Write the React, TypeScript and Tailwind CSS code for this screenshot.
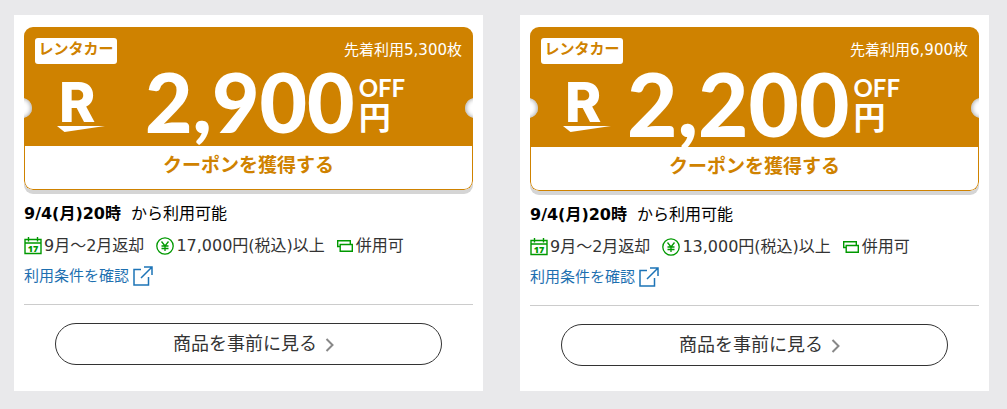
type Coupon = {
  amount: string;
  limit: string;
  minPrice: string;
  headerClass: string;
  priceClass: string;
  amountClass: string;
};

const coupons: Coupon[] = [
  {
    amount: "2,900",
    limit: "5,300",
    minPrice: "17,000",
    headerClass: "h-[119px]",
    priceClass: "ml-10",
    amountClass: "text-[82px] leading-[76px]",
  },
  {
    amount: "2,200",
    limit: "6,900",
    minPrice: "13,000",
    headerClass: "h-[120px]",
    priceClass: "ml-4",
    amountClass: "text-[87px] leading-[82px]",
  },
];

function Logo() {
  return (
    <svg className="h-[72px] w-12 shrink-0" viewBox="0 0 48 72" fill="#fff" aria-label="R">
      <text x="2" y="59" fontSize="55" fontWeight="800" fontFamily="Inter, sans-serif">
        R
      </text>
      <path d="M0 63H48L7.500 69Z" />
    </svg>
  );
}

function CalendarIcon() {
  return (
    <svg className="h-[18px] w-[18px]" viewBox="0 0 18 18" fill="none" stroke="#090" strokeWidth="1.400">
      <path d="M1 2.500H17V16.500H1ZM1 6H17M4.500 0V4.500M13.500 0V4.500" />
      <text
        x="9"
        y="14.500"
        fontSize="9"
        fontWeight="800"
        textAnchor="middle"
        fill="#090"
        stroke="none"
        fontFamily="Open Sans, sans-serif"
      >
        17
      </text>
    </svg>
  );
}

function YenIcon() {
  return (
    <svg className="h-[18px] w-[18px]" viewBox="0 0 18 18" fill="none" stroke="#090" strokeWidth="1.300">
      <circle cx="9" cy="9" r="8.200" />
      <path d="M5.500 4.500L9 9L12.500 4.500M9 9V14M5.500 9H12.500M5.500 11.500H12.500" />
    </svg>
  );
}

function TicketsIcon() {
  return (
    <svg className="h-3 w-4" viewBox="0 0 16 12" fill="none" stroke="#090" strokeWidth="1.400">
      <path d="M3 6.500H0.700V0.700H13.300V4" />
      <path d="M3.200 4.500H15.300V11.300H3.200Z" />
    </svg>
  );
}

function ExternalIcon() {
  return (
    <svg className="h-5 w-5" viewBox="0 0 20 20" fill="none" stroke="#1d74b7" strokeWidth="1.500">
      <path d="M8 3.500H1V19H15.500V11" />
      <path d="M8 12L18.500 1.500M11 1H19V9" />
    </svg>
  );
}

function CouponCard({ coupon }: { coupon: Coupon }) {
  return (
    <section className="bg-white px-[10px] pt-3 pb-[25px]">
      <div className="overflow-hidden rounded-[9px] bg-white shadow-[0_4px_0_#d5d5d5]">
        <div className={`relative bg-[#cf8200] px-[11px] pt-[11px] text-white ${coupon.headerClass}`}>
          <div className="flex justify-between">
            <span className="h-[26px] w-[82px] rounded-[3px] bg-white text-center text-[15px] leading-[22px] font-bold text-[#cf8200]">
              レンタカー
            </span>
            <span className="text-[15px] leading-6">先着利用{coupon.limit}枚</span>
          </div>
          <div className="-mt-px flex h-[80px] items-start pl-[22px]">
            <Logo />
            <div className={`flex ${coupon.priceClass}`}>
              <span className={`font-['Lato',sans-serif] font-black ${coupon.amountClass}`}>
                {coupon.amount}
              </span>
              <span className="ml-1 flex flex-col pt-3 font-bold">
                <span className="font-['Lato',sans-serif] text-[24px] leading-[26px]">OFF</span>
                <span className="text-[32px] leading-[34px]">円</span>
              </span>
            </div>
          </div>
          <span className="absolute top-[71px] -left-3 h-5 w-5 rounded-full bg-white shadow-[inset_-1px_0_4px_#aaa]" />
          <span className="absolute top-[71px] -right-3 h-5 w-5 rounded-full bg-white shadow-[inset_1px_0_4px_#aaa]" />
        </div>
        <button className="block h-11 w-full rounded-b-[9px] border border-t-0 border-[#cf8200] pb-1 text-[19px] font-bold text-[#cf8200]">
          クーポンを獲得する
        </button>
      </div>

      <p className="mt-3 flex gap-[10px] text-[16px] leading-6 text-black">
        <b>9/4(月)20時</b>
        <span>から利用可能</span>
      </p>
      <ul className="mt-2 flex gap-3 text-[16px] leading-6 whitespace-nowrap">
        <li className="flex items-center gap-[2px]">
          <CalendarIcon />
          9月～2月返却
        </li>
        <li className="flex items-center gap-[2px]">
          <YenIcon />
          {coupon.minPrice}円(税込)以上
        </li>
        <li className="flex items-center gap-[3px]">
          <TicketsIcon />
          併用可
        </li>
      </ul>
      <a href="#" className="mt-[6px] flex items-center gap-1 text-[15px] leading-6 text-[#1d6fb0]">
        利用条件を確認
        <ExternalIcon />
      </a>

      <hr className="mt-4 border-[#ccc]" />
      <button className="mx-auto mt-[18px] flex h-[42px] w-[86%] items-center justify-center gap-2 rounded-full border border-[#333] pb-[2px] pl-[10px] text-[18px]">
        商品を事前に見る
        <svg className="mt-1 h-[14px] w-[9px]" viewBox="0 0 9 14" fill="none" stroke="#888" strokeWidth="2">
          <path d="M1.500 1L7.500 7L1.500 13" />
        </svg>
      </button>
    </section>
  );
}

export default function App() {
  return (
    <main className="grid min-h-screen grid-cols-2 items-stretch gap-[37px] bg-[#e9e9eb] pt-[15px] pr-[18px] pb-[18px] pl-[14px] font-['DejaVu_Sans','Noto_Sans_CJK_JP',sans-serif] text-[#333]">
      {coupons.map((coupon) => (
        <CouponCard key={coupon.amount} coupon={coupon} />
      ))}
    </main>
  );
}
